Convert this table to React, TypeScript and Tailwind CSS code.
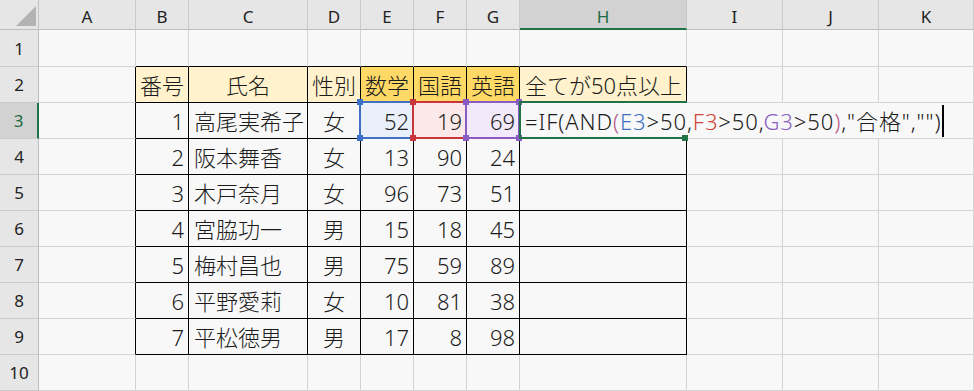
import type { ReactNode } from 'react';

type Line = 'grid' | 'black' | 'none';
type Align = 'left' | 'center' | 'right';

const RIGHT: Record<Line, string> = {
  grid: 'border-r border-r-[#d4d4d4]',
  black: 'border-r border-r-black',
  none: '',
};

const BOTTOM: Record<Line, string> = {
  grid: 'border-b border-b-[#d4d4d4]',
  black: 'border-b border-b-black',
  none: '',
};

const ALIGN: Record<Align, string> = {
  left: 'justify-start pl-[5px]',
  center: 'justify-center',
  right: 'justify-end pr-[4px]',
};

const COLUMNS = ['A', 'B', 'C', 'D', 'E', 'F', 'G', 'H', 'I', 'J', 'K'];

const LIGHT = 'bg-[#fff2cc]';
const GOLD = 'bg-[#ffd966]';

const headings: { text: string; align: Align; bg: string }[] = [
  { text: '番号', align: 'center', bg: LIGHT },
  { text: '氏名', align: 'center', bg: LIGHT },
  { text: '性別', align: 'center', bg: LIGHT },
  { text: '数学', align: 'center', bg: GOLD },
  { text: '国語', align: 'center', bg: GOLD },
  { text: '英語', align: 'center', bg: GOLD },
  { text: '全てが50点以上', align: 'left', bg: LIGHT },
];

const students: [number, string, string, number, number, number][] = [
  [1, '高尾実希子', '女', 52, 19, 69],
  [2, '阪本舞香', '女', 13, 90, 24],
  [3, '木戸奈月', '女', 96, 73, 51],
  [4, '宮脇功一', '男', 15, 18, 45],
  [5, '梅村昌也', '男', 75, 59, 89],
  [6, '平野愛莉', '女', 10, 81, 38],
  [7, '平松徳男', '男', 17, 8, 98],
];

// fills behind the ranges referenced by the formula
const refFill: Record<number, string> = {
  4: 'bg-[#e9f0fa]',
  5: 'bg-[#fbe8e8]',
  6: 'bg-[#f2e9fa]',
};

function Cell({
  r = 'grid',
  b = 'grid',
  align = 'left',
  bg = '',
  children,
}: {
  r?: Line;
  b?: Line;
  align?: Align;
  bg?: string;
  children?: ReactNode;
}) {
  return (
    <div className={`flex items-center whitespace-nowrap ${RIGHT[r]} ${BOTTOM[b]} ${ALIGN[align]} ${bg}`}>
      {children}
    </div>
  );
}

function Formula() {
  return (
    <>
      <span className="shrink-0 tracking-[0.9px]">
        {'=IF(AND'}
        <span className="text-[#b4588a]">(</span>
        <span className="text-[#3e6fc3]">E3</span>
        {'>50,'}
        <span className="text-[#cc4536]">F3</span>
        {'>50,'}
        <span className="text-[#8b5fc3]">G3</span>
        {'>50'}
        <span className="text-[#b4588a]">)</span>
        {',"合格","")'}
      </span>
      <span className="ml-[1px] h-[32px] w-[2px] shrink-0 bg-black" />
    </>
  );
}

function bodyCell(row: number, col: number) {
  const inTable = row >= 2 && row <= 9 && col >= 1 && col <= 7;
  let r: Line = inTable || (row >= 2 && row <= 9 && col === 0) ? 'black' : 'grid';
  const b: Line = inTable || (row === 1 && col >= 1 && col <= 7) ? 'black' : 'grid';

  // the cell being edited spills over its neighbours on row 3
  if (row === 3 && col >= 7 && col <= 9) r = 'none';

  if (row === 2 && inTable) {
    const h = headings[col - 1];
    return (
      <Cell key={col} r={r} b={b} align={h.align} bg={h.bg}>
        {h.text}
      </Cell>
    );
  }

  if (row >= 3 && row <= 9 && inTable) {
    const s = students[row - 3];
    if (col === 1) return <Cell key={col} r={r} b={b} align="right">{s[0]}</Cell>;
    if (col === 2) return <Cell key={col} r={r} b={b}>{s[1]}</Cell>;
    if (col === 3) return <Cell key={col} r={r} b={b} align="center">{s[2]}</Cell>;
    if (col >= 4 && col <= 6)
      return (
        <Cell key={col} r={r} b={b} align="right" bg={row === 3 ? refFill[col] : ''}>
          {s[col - 1]}
        </Cell>
      );
    if (row === 3)
      return (
        <Cell key={col} r={r} b={b}>
          <Formula />
        </Cell>
      );
  }

  return <Cell key={col} r={r} b={b} />;
}

function RefBox({ left, border, square }: { left: number; border: string; square: string }) {
  const corners = [
    [left - 2, 99],
    [left + 51, 99],
    [left - 2, 135],
    [left + 51, 135],
  ];
  return (
    <>
      <div className={`absolute top-[101px] h-[38px] w-[55px] border-2 ${border}`} style={{ left }} />
      {corners.map(([x, y]) => (
        <div key={`${x}-${y}`} className={`absolute h-[6px] w-[6px] ${square}`} style={{ left: x, top: y }} />
      ))}
    </>
  );
}

export default function App() {
  return (
    <div className="relative h-[391px] w-[974px] overflow-hidden bg-[#f8f8f8] font-['Noto_Sans','Noto_Sans_CJK_JP',sans-serif] text-[22px] font-light leading-none text-[#1b1b1b]">
      <div className="grid grid-cols-[39px_97px_53px_119px_53px_53px_53px_53px_167px_96px_96px_95px] grid-rows-[30px_37px_repeat(9,36px)]">
        {/* column headings */}
        <div className="border-r border-b border-r-[#c2c2c2] border-b-[#bdbdbd] bg-[#e6e6e6]">
          <svg width="38" height="29" viewBox="0 0 38 29">
            <polygon points="36,6 36,26 16,26" fill="#b3b3b3" />
          </svg>
        </div>
        {COLUMNS.map((c) =>
          c === 'H' ? (
            <div
              key={c}
              className="flex items-center justify-center border-r border-b-2 border-r-[#c8c8c8] border-b-[#217346] bg-[#d2d2d2] pt-[4px] text-[17px] font-normal text-[#1d6b41]"
            >
              {c}
            </div>
          ) : (
            <div
              key={c}
              className="flex items-center justify-center border-r border-b border-r-[#cacaca] border-b-[#bdbdbd] bg-[#e6e6e6] pt-[4px] text-[17px] font-normal text-[#222]"
            >
              {c}
            </div>
          ),
        )}

        {Array.from({ length: 10 }, (_, i) => i + 1).map((row) => [
          row === 3 ? (
            <div
              key={`h${row}`}
              className="flex items-center justify-center border-r-2 border-b border-r-[#217346] border-b-[#cacaca] bg-[#d2d2d2] text-[17px] font-normal text-[#1d6b41]"
            >
              {row}
            </div>
          ) : (
            <div
              key={`h${row}`}
              className="flex items-center justify-center border-r border-b border-r-[#bdbdbd] border-b-[#cacaca] bg-[#e6e6e6] text-[17px] font-normal text-[#222]"
            >
              {row}
            </div>
          ),
          ...COLUMNS.map((_, col) => bodyCell(row, col)),
        ])}
      </div>

      {/* ranges picked up by the formula */}
      <RefBox left={359} border="border-[#3d70c6]" square="bg-[#3d70c6]" />
      <RefBox left={412} border="border-[#c8363b]" square="bg-[#c8363b]" />
      <RefBox left={465} border="border-[#8a5bc2]" square="bg-[#8a5bc2]" />

      {/* active cell */}
      <div className="absolute left-[519px] top-[101px] h-[38px] w-[168px] border-t-2 border-l-2 border-b-2 border-[#217346]" />
      <div className="absolute left-[682px] top-[135px] h-[6px] w-[6px] bg-[#217346]" />
    </div>
  );
}
